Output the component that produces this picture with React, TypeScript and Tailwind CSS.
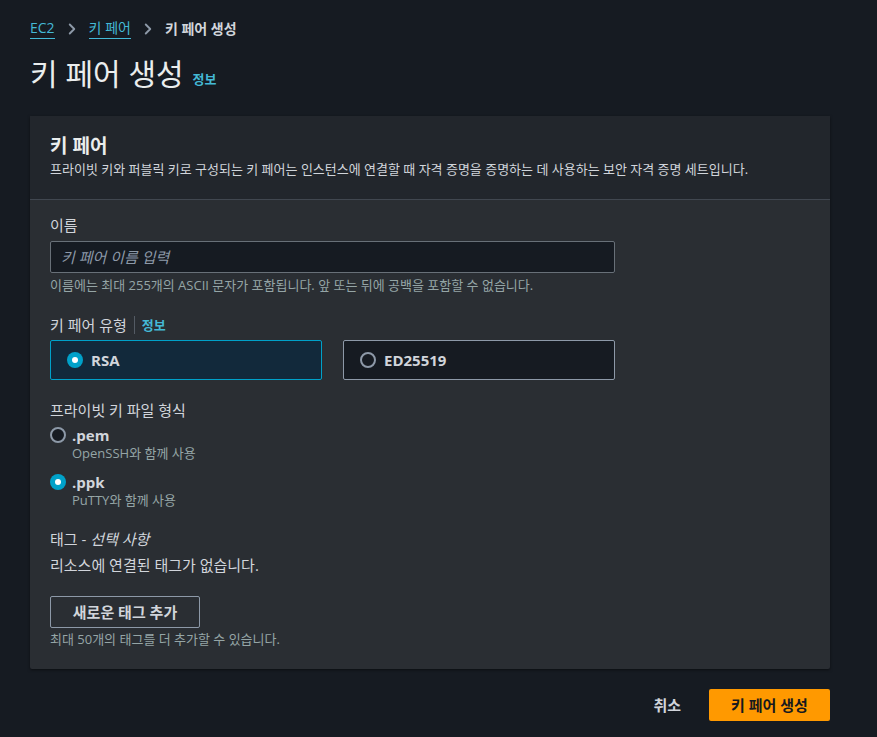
import { ChevronRight } from "lucide-react";

const FONT = { fontFamily: '"Open Sans", "Noto Sans CJK KR", sans-serif' };

function Radio({ checked }: { checked: boolean }) {
  return checked ? (
    <span className="flex h-[16px] w-[16px] shrink-0 items-center justify-center rounded-full bg-[#00a1c9]">
      <span className="h-[6px] w-[6px] rounded-full bg-white" />
    </span>
  ) : (
    <span className="h-[16px] w-[16px] shrink-0 rounded-full border-2 border-[#8d99a8] bg-[#161b22]" />
  );
}

export default function App() {
  return (
    <main className="min-h-screen bg-[#161b22] text-[#d1d5db]" style={FONT}>
      <div className="w-[877px] px-[30px] pt-[18px]">
        <nav className="flex items-center gap-[8px] text-[14px] leading-[20px]">
          <span className="border-b border-[#44b9d6] text-[#44b9d6]">EC2</span>
          <ChevronRight className="h-[18px] w-[18px] text-[#8d99a8]" strokeWidth={2.5} />
          <span className="border-b border-[#44b9d6] text-[#44b9d6]">키 페어</span>
          <ChevronRight className="h-[18px] w-[18px] text-[#8d99a8]" strokeWidth={2.5} />
          <span className="font-bold text-[#d1d5db]">키 페어 생성</span>
        </nav>

        <div className="mt-[16px] flex items-end gap-[9px]">
          <h1 className="text-[30px] leading-[38px] text-[#eaeded]">키 페어 생성</h1>
          <span className="pb-[4px] text-[13px] font-bold text-[#44b9d6]">정보</span>
        </div>

        <section className="mt-[23px] w-[800px] rounded-[2px] bg-[#2a2e33] shadow-[0_1px_3px_rgba(0,0,0,0.5)]">
          <div className="border-b border-[#414750] bg-[#22262c] px-[20px] pb-[21px] pt-[18px]">
            <h2 className="text-[19px] font-bold leading-[25px] text-[#eaeded]">키 페어</h2>
            <p className="mt-[2px] text-[13px] leading-[17px] text-[#d1d5db]">
              프라이빗 키와 퍼블릭 키로 구성되는 키 페어는 인스턴스에 연결할 때 자격 증명을 증명하는 데 사용하는 보안 자격 증명 세트입니다.
            </p>
          </div>

          <div className="px-[20px] pb-[21px] pt-[14px]">
            <label className="block text-[15px] leading-[22px] text-[#d1d5db]">이름</label>
            <div className="mt-[5px] flex h-[32px] w-[565px] items-center rounded-[2px] border border-[#687078] bg-[#161b22] px-[10px]">
              <span className="text-[15px] italic text-[#8d99a8]">키 페어 이름 입력</span>
            </div>
            <p className="mt-[4px] text-[13px] leading-[17px] text-[#95a5a6]">
              이름에는 최대 255개의 ASCII 문자가 포함됩니다. 앞 또는 뒤에 공백을 포함할 수 없습니다.
            </p>

            <div className="mt-[20px] flex items-center text-[15px] leading-[22px]">
              <span className="text-[#d1d5db]">키 페어 유형</span>
              <span className="mx-[7px] h-[18px] w-px bg-[#545b64]" />
              <span className="text-[13px] font-bold text-[#44b9d6]">정보</span>
            </div>
            <div className="mt-[4px] flex w-[565px] gap-[21px]">
              <div className="flex h-[40px] flex-1 items-center gap-[8px] rounded-[2px] border border-[#00a1c9] bg-[#12293b] pl-[16px] pr-[15px]">
                <Radio checked />
                <span className="text-[15px] font-bold text-[#d1d5db]">RSA</span>
              </div>
              <div className="flex h-[40px] flex-1 items-center gap-[8px] rounded-[2px] border border-[#8d99a8] bg-[#161b22] pl-[16px] pr-[15px]">
                <Radio checked={false} />
                <span className="text-[15px] font-bold text-[#d1d5db]">ED25519</span>
              </div>
            </div>

            <p className="mt-[19px] text-[15px] leading-[22px] text-[#d1d5db]">프라이빗 키 파일 형식</p>
            <div className="mt-[4px] flex flex-col gap-[10px]">
              <div className="flex gap-[6px]">
                <div className="flex h-[20px] items-center">
                  <Radio checked={false} />
                </div>
                <div>
                  <p className="text-[15px] font-bold leading-[20px] text-[#d1d5db]">.pem</p>
                  <p className="text-[13px] leading-[17px] text-[#95a5a6]">OpenSSH와 함께 사용</p>
                </div>
              </div>
              <div className="flex gap-[6px]">
                <div className="flex h-[20px] items-center">
                  <Radio checked />
                </div>
                <div>
                  <p className="text-[15px] font-bold leading-[20px] text-[#d1d5db]">.ppk</p>
                  <p className="text-[13px] leading-[17px] text-[#95a5a6]">PuTTY와 함께 사용</p>
                </div>
              </div>
            </div>

            <p className="mt-[19px] text-[15px] leading-[22px] text-[#d1d5db]">
              태그 - <i>선택 사항</i>
            </p>
            <p className="mt-[4px] text-[15px] leading-[22px] text-[#d1d5db]">리소스에 연결된 태그가 없습니다.</p>

            <button
              className="mt-[20px] flex h-[32px] w-[150px] items-center justify-center rounded-[2px] border border-[#8d99a8] text-[15px] font-bold text-[#d1d5db]"
              type="button"
            >
              새로운 태그 추가
            </button>
            <p className="mt-[3px] text-[13px] leading-[17px] text-[#95a5a6]">최대 50개의 태그를 더 추가할 수 있습니다.</p>
          </div>
        </section>

        <div className="mt-[20px] flex w-[800px] items-center justify-end gap-[28px]">
          <button className="text-[15px] font-bold text-[#d1d5db]" type="button">
            취소
          </button>
          <button
            className="flex h-[32px] w-[121px] items-center justify-center rounded-[2px] bg-[#ff9900] text-[15px] font-bold text-[#16191f]"
            type="button"
          >
            키 페어 생성
          </button>
        </div>
      </div>
    </main>
  );
}
